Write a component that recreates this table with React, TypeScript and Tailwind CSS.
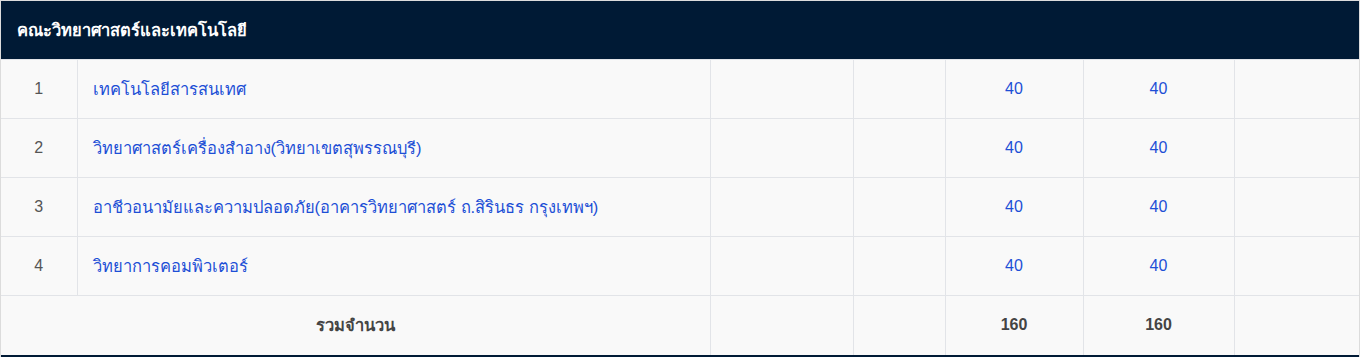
const rows = [
  { no: 1, name: "เทคโนโลยีสารสนเทศ", a: 40, b: 40 },
  { no: 2, name: "วิทยาศาสตร์เครื่องสำอาง(วิทยาเขตสุพรรณบุรี)", a: 40, b: 40 },
  { no: 3, name: "อาชีวอนามัยและความปลอดภัย(อาคารวิทยาศาสตร์ ถ.สิรินธร กรุงเทพฯ)", a: 40, b: 40 },
  { no: 4, name: "วิทยาการคอมพิวเตอร์", a: 40, b: 40 },
];

const font = { fontFamily: '"Liberation Sans", Arial, "Noto Sans", sans-serif' };

const App = () => {
  return (
    <div className="bg-white w-[1361px]" style={font}>
      <div className="w-[1360px] border border-[#dcdcdc]">
        <div className="h-[58px] bg-[#001a35] flex items-center px-4">
          <h3 className="text-white text-[16.5px] font-bold">คณะวิทยาศาสตร์และเทคโนโลยี</h3>
        </div>
        <table className="w-full border-collapse table-fixed bg-[#f9f9f9] text-[16px]">
          <colgroup>
            <col className="w-[76px]" />
            <col className="w-[633px]" />
            <col className="w-[143px]" />
            <col className="w-[92px]" />
            <col className="w-[138px]" />
            <col className="w-[151px]" />
            <col />
          </colgroup>
          <tbody>
            {rows.map((r) => (
              <tr key={r.no} className="h-[59px] border-t border-[#e2e4e8]">
                <td className="text-center text-[#555] border-r border-[#e2e4e8]">{r.no}</td>
                <td className="px-[15px] text-[16.5px] text-[#1d4fd6] border-r border-[#e2e4e8]">{r.name}</td>
                <td className="border-r border-[#e2e4e8]"></td>
                <td className="border-r border-[#e2e4e8]"></td>
                <td className="text-center text-[#1d4fd6] border-r border-[#e2e4e8]">{r.a}</td>
                <td className="text-center text-[#1d4fd6] border-r border-[#e2e4e8]">{r.b}</td>
                <td></td>
              </tr>
            ))}
            <tr className="h-[59px] border-t border-[#e2e4e8]">
              <td colSpan={2} className="text-center font-bold text-[16.5px] text-[#444] border-r border-[#e2e4e8]">
                รวมจำนวน
              </td>
              <td className="border-r border-[#e2e4e8]"></td>
              <td className="border-r border-[#e2e4e8]"></td>
              <td className="text-center font-bold text-[#444] border-r border-[#e2e4e8]">160</td>
              <td className="text-center font-bold text-[#444] border-r border-[#e2e4e8]">160</td>
              <td></td>
            </tr>
          </tbody>
        </table>
        <div className="h-[58px] bg-[#001a35]"></div>
      </div>
    </div>
  );
};

export default App;
